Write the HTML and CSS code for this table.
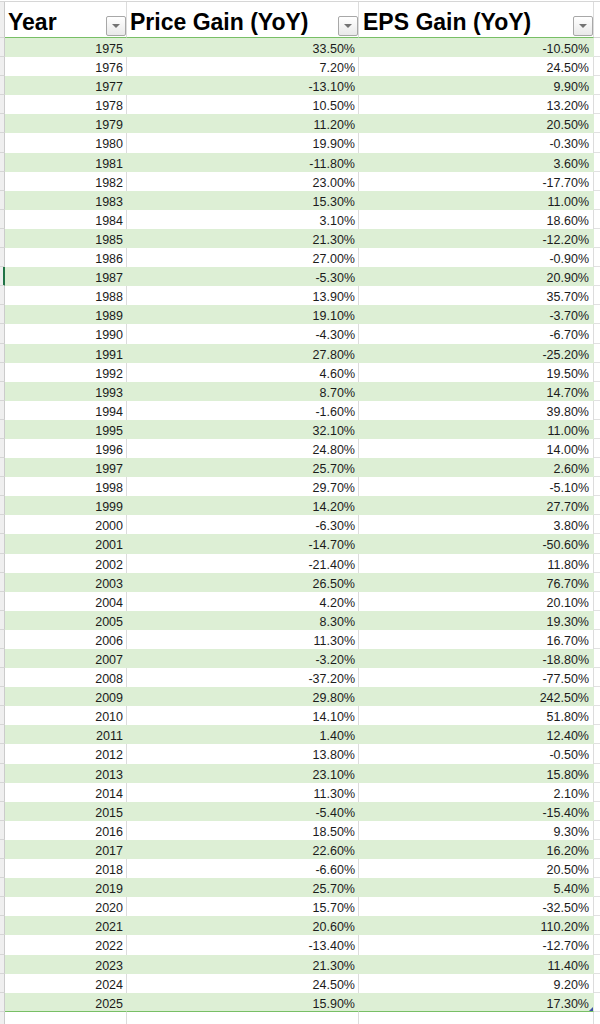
FILE: index.html
```html
<!DOCTYPE html>
<html>
<head>
<meta charset="utf-8">
<title>Price vs EPS Gain</title>
<link rel="stylesheet" href="styles.css">
</head>
<body>
<div class="sheet">
  <div class="row head">
    <div class="g"></div>
    <div class="h a"><span class="ht">Year</span><span class="dd"></span></div>
    <div class="h b"><span class="ht">Price Gain (YoY)</span><span class="dd"></span></div>
    <div class="h c3"><span class="ht">EPS Gain (YoY)</span><span class="dd"></span></div>
    <div class="d"></div>
  </div>
  <div class="body">
    <div class="row"><div class="g"></div><div class="c a">1975</div><div class="c b">33.50%</div><div class="c c3">-10.50%</div><div class="d"></div></div>
    <div class="row"><div class="g"></div><div class="c a">1976</div><div class="c b">7.20%</div><div class="c c3">24.50%</div><div class="d"></div></div>
    <div class="row"><div class="g"></div><div class="c a">1977</div><div class="c b">-13.10%</div><div class="c c3">9.90%</div><div class="d"></div></div>
    <div class="row"><div class="g"></div><div class="c a">1978</div><div class="c b">10.50%</div><div class="c c3">13.20%</div><div class="d"></div></div>
    <div class="row"><div class="g"></div><div class="c a">1979</div><div class="c b">11.20%</div><div class="c c3">20.50%</div><div class="d"></div></div>
    <div class="row"><div class="g"></div><div class="c a">1980</div><div class="c b">19.90%</div><div class="c c3">-0.30%</div><div class="d"></div></div>
    <div class="row"><div class="g"></div><div class="c a">1981</div><div class="c b">-11.80%</div><div class="c c3">3.60%</div><div class="d"></div></div>
    <div class="row"><div class="g"></div><div class="c a">1982</div><div class="c b">23.00%</div><div class="c c3">-17.70%</div><div class="d"></div></div>
    <div class="row"><div class="g"></div><div class="c a">1983</div><div class="c b">15.30%</div><div class="c c3">11.00%</div><div class="d"></div></div>
    <div class="row"><div class="g"></div><div class="c a">1984</div><div class="c b">3.10%</div><div class="c c3">18.60%</div><div class="d"></div></div>
    <div class="row"><div class="g"></div><div class="c a">1985</div><div class="c b">21.30%</div><div class="c c3">-12.20%</div><div class="d"></div></div>
    <div class="row"><div class="g"></div><div class="c a">1986</div><div class="c b">27.00%</div><div class="c c3">-0.90%</div><div class="d"></div></div>
    <div class="row"><div class="g sel"></div><div class="c a">1987</div><div class="c b">-5.30%</div><div class="c c3">20.90%</div><div class="d"></div></div>
    <div class="row"><div class="g"></div><div class="c a">1988</div><div class="c b">13.90%</div><div class="c c3">35.70%</div><div class="d"></div></div>
    <div class="row"><div class="g"></div><div class="c a">1989</div><div class="c b">19.10%</div><div class="c c3">-3.70%</div><div class="d"></div></div>
    <div class="row"><div class="g"></div><div class="c a">1990</div><div class="c b">-4.30%</div><div class="c c3">-6.70%</div><div class="d"></div></div>
    <div class="row"><div class="g"></div><div class="c a">1991</div><div class="c b">27.80%</div><div class="c c3">-25.20%</div><div class="d"></div></div>
    <div class="row"><div class="g"></div><div class="c a">1992</div><div class="c b">4.60%</div><div class="c c3">19.50%</div><div class="d"></div></div>
    <div class="row"><div class="g"></div><div class="c a">1993</div><div class="c b">8.70%</div><div class="c c3">14.70%</div><div class="d"></div></div>
    <div class="row"><div class="g"></div><div class="c a">1994</div><div class="c b">-1.60%</div><div class="c c3">39.80%</div><div class="d"></div></div>
    <div class="row"><div class="g"></div><div class="c a">1995</div><div class="c b">32.10%</div><div class="c c3">11.00%</div><div class="d"></div></div>
    <div class="row"><div class="g"></div><div class="c a">1996</div><div class="c b">24.80%</div><div class="c c3">14.00%</div><div class="d"></div></div>
    <div class="row"><div class="g"></div><div class="c a">1997</div><div class="c b">25.70%</div><div class="c c3">2.60%</div><div class="d"></div></div>
    <div class="row"><div class="g"></div><div class="c a">1998</div><div class="c b">29.70%</div><div class="c c3">-5.10%</div><div class="d"></div></div>
    <div class="row"><div class="g"></div><div class="c a">1999</div><div class="c b">14.20%</div><div class="c c3">27.70%</div><div class="d"></div></div>
    <div class="row"><div class="g"></div><div class="c a">2000</div><div class="c b">-6.30%</div><div class="c c3">3.80%</div><div class="d"></div></div>
    <div class="row"><div class="g"></div><div class="c a">2001</div><div class="c b">-14.70%</div><div class="c c3">-50.60%</div><div class="d"></div></div>
    <div class="row"><div class="g"></div><div class="c a">2002</div><div class="c b">-21.40%</div><div class="c c3">11.80%</div><div class="d"></div></div>
    <div class="row"><div class="g"></div><div class="c a">2003</div><div class="c b">26.50%</div><div class="c c3">76.70%</div><div class="d"></div></div>
    <div class="row"><div class="g"></div><div class="c a">2004</div><div class="c b">4.20%</div><div class="c c3">20.10%</div><div class="d"></div></div>
    <div class="row"><div class="g"></div><div class="c a">2005</div><div class="c b">8.30%</div><div class="c c3">19.30%</div><div class="d"></div></div>
    <div class="row"><div class="g"></div><div class="c a">2006</div><div class="c b">11.30%</div><div class="c c3">16.70%</div><div class="d"></div></div>
    <div class="row"><div class="g"></div><div class="c a">2007</div><div class="c b">-3.20%</div><div class="c c3">-18.80%</div><div class="d"></div></div>
    <div class="row"><div class="g"></div><div class="c a">2008</div><div class="c b">-37.20%</div><div class="c c3">-77.50%</div><div class="d"></div></div>
    <div class="row"><div class="g"></div><div class="c a">2009</div><div class="c b">29.80%</div><div class="c c3">242.50%</div><div class="d"></div></div>
    <div class="row"><div class="g"></div><div class="c a">2010</div><div class="c b">14.10%</div><div class="c c3">51.80%</div><div class="d"></div></div>
    <div class="row"><div class="g"></div><div class="c a">2011</div><div class="c b">1.40%</div><div class="c c3">12.40%</div><div class="d"></div></div>
    <div class="row"><div class="g"></div><div class="c a">2012</div><div class="c b">13.80%</div><div class="c c3">-0.50%</div><div class="d"></div></div>
    <div class="row"><div class="g"></div><div class="c a">2013</div><div class="c b">23.10%</div><div class="c c3">15.80%</div><div class="d"></div></div>
    <div class="row"><div class="g"></div><div class="c a">2014</div><div class="c b">11.30%</div><div class="c c3">2.10%</div><div class="d"></div></div>
    <div class="row"><div class="g"></div><div class="c a">2015</div><div class="c b">-5.40%</div><div class="c c3">-15.40%</div><div class="d"></div></div>
    <div class="row"><div class="g"></div><div class="c a">2016</div><div class="c b">18.50%</div><div class="c c3">9.30%</div><div class="d"></div></div>
    <div class="row"><div class="g"></div><div class="c a">2017</div><div class="c b">22.60%</div><div class="c c3">16.20%</div><div class="d"></div></div>
    <div class="row"><div class="g"></div><div class="c a">2018</div><div class="c b">-6.60%</div><div class="c c3">20.50%</div><div class="d"></div></div>
    <div class="row"><div class="g"></div><div class="c a">2019</div><div class="c b">25.70%</div><div class="c c3">5.40%</div><div class="d"></div></div>
    <div class="row"><div class="g"></div><div class="c a">2020</div><div class="c b">15.70%</div><div class="c c3">-32.50%</div><div class="d"></div></div>
    <div class="row"><div class="g"></div><div class="c a">2021</div><div class="c b">20.60%</div><div class="c c3">110.20%</div><div class="d"></div></div>
    <div class="row"><div class="g"></div><div class="c a">2022</div><div class="c b">-13.40%</div><div class="c c3">-12.70%</div><div class="d"></div></div>
    <div class="row"><div class="g"></div><div class="c a">2023</div><div class="c b">21.30%</div><div class="c c3">11.40%</div><div class="d"></div></div>
    <div class="row"><div class="g"></div><div class="c a">2024</div><div class="c b">24.50%</div><div class="c c3">9.20%</div><div class="d"></div></div>
    <div class="row last"><div class="g"></div><div class="c a">2025</div><div class="c b">15.90%</div><div class="c c3 corner">17.30%</div><div class="d"></div></div>
  </div>
  <div class="row blank"><div class="g"></div><div class="c a"></div><div class="c b"></div><div class="c c3"></div><div class="d"></div></div>
</div>
</body>
</html>
```

FILE: styles.css
```css
html, body {
  margin: 0;
  padding: 0;
  background: #ffffff;
}

body {
  font-family: "Liberation Sans", Arial, sans-serif;
  color: #1b1b1b;
}

.sheet {
  width: 600px;
  height: 1024px;
  overflow: hidden;
  padding-top: 1px;
  box-sizing: border-box;
}

.row {
  display: flex;
  height: 19.1px;
}

.g {
  flex: none;
  width: 5px;
  box-sizing: border-box;
  background: #efefef;
  border-right: 1px solid #cbcbcb;
  border-bottom: 1px solid #d6d6d6;
}

.g.sel {
  border-right-color: #217346;
  box-shadow: inset -1px 0 0 #217346;
}

.a { flex: none; width: 122px; }
.b { flex: none; width: 232px; }
.c3 { flex: none; width: 235px; }

.d {
  flex: 1;
  box-sizing: border-box;
  border-bottom: 1px solid #e1e1e1;
}

.c {
  box-sizing: border-box;
  border-right: 1px solid #dcdcdc;
  text-align: right;
  font-size: 12.5px;
  line-height: 14px;
  padding-top: 4px;
  padding-right: 3px;
  white-space: nowrap;
}

.c.c3 { padding-right: 4px; }

.body .row:nth-child(odd) .c {
  background: #ddefd5;
  border-right-color: transparent;
}

.row.last .c {
  border-bottom: 1px solid #78bf66;
}

.corner {
  position: relative;
}

.corner::after {
  content: "";
  position: absolute;
  right: 0;
  bottom: 0;
  width: 0;
  height: 0;
  border-style: solid;
  border-width: 0 0 4px 4px;
  border-color: transparent transparent #3f53a8 transparent;
}

/* header */
.row.head {
  height: 37px;
  border-top: 1px solid #d6d6d6;
  box-sizing: border-box;
}

.h {
  box-sizing: border-box;
  display: flex;
  justify-content: space-between;
  align-items: flex-start;
  border-right: 1px solid #dcdcdc;
  border-bottom: 1px solid #78bf66;
  padding-left: 3px;
  background: #ffffff;
}

.h.c3 { padding-left: 4px; }

.ht {
  font-weight: bold;
  font-size: 23px;
  line-height: 26px;
  padding-top: 7px;
  color: #000000;
  white-space: nowrap;
}

.dd {
  flex: none;
  align-self: flex-end;
  position: relative;
  width: 20px;
  height: 20px;
  margin-bottom: 1px;
  box-sizing: border-box;
  border: 1px solid #a8a8a8;
  border-radius: 2px;
  background: linear-gradient(#ffffff, #e9e9e9);
}

.dd::after {
  content: "";
  position: absolute;
  left: 5px;
  top: 7px;
  width: 0;
  height: 0;
  border-style: solid;
  border-width: 4px 4px 0 4px;
  border-color: #737373 transparent transparent transparent;
}

.row.head .d {
  border-bottom-color: #d6d6d6;
}
```
